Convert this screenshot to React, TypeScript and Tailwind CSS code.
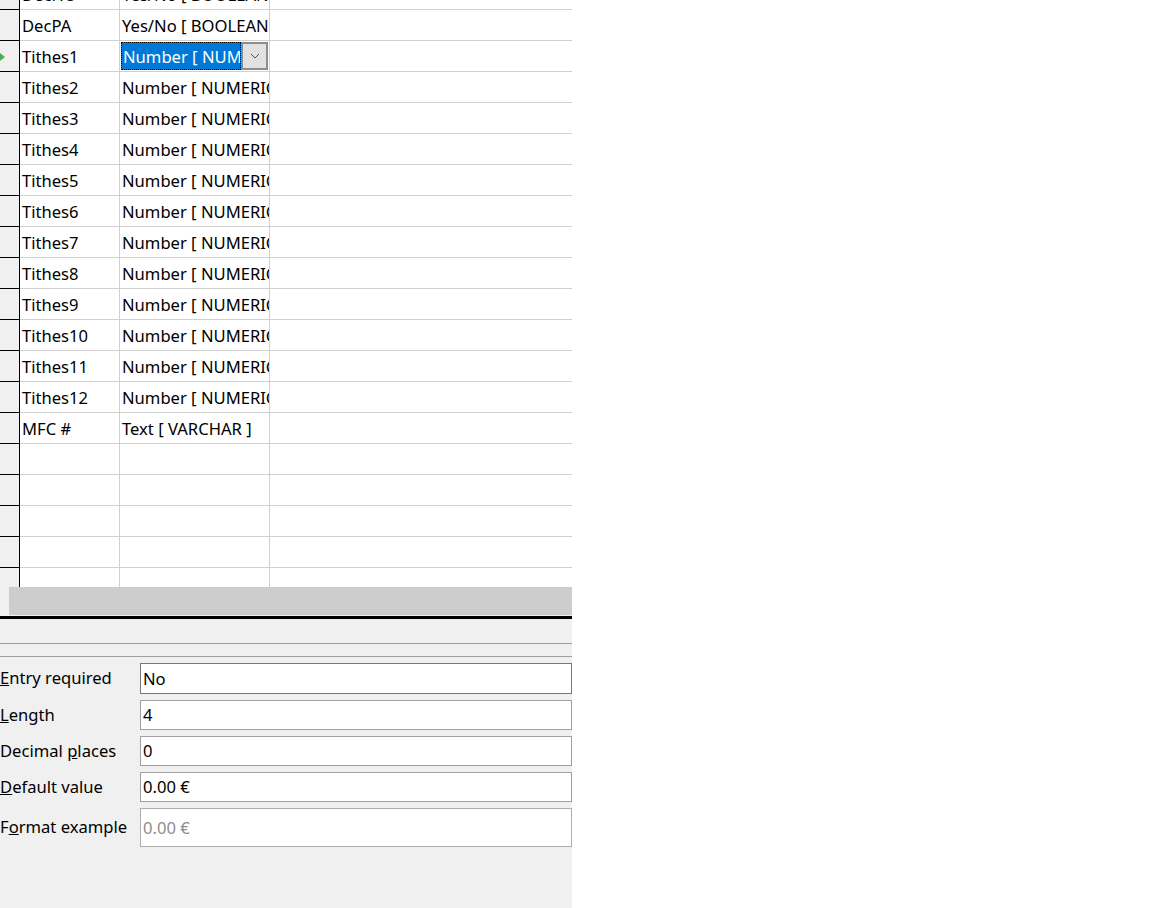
import React from "react";

type Row = { name: string; type: string; current?: boolean };

const rows: Row[] = [
  { name: "DecHO", type: "Yes/No [ BOOLEAN ]" },
  { name: "DecPA", type: "Yes/No [ BOOLEAN ]" },
  { name: "Tithes1", type: "Number [ NUMERIC ]", current: true },
  ...Array.from({ length: 11 }, (_, i) => ({ name: `Tithes${i + 2}`, type: "Number [ NUMERIC ]" })),
  { name: "MFC #", type: "Text [ VARCHAR ]" },
  { name: "", type: "" },
  { name: "", type: "" },
  { name: "", type: "" },
  { name: "", type: "" },
  { name: "", type: "" },
];

function GridRow({ row }: { row: Row }) {
  return (
    <div className="flex h-[31px] shrink-0">
      <div className="relative w-[20px] shrink-0 border-r border-b border-black bg-[#f0f0f0]">
        {row.current && (
          <svg className="absolute left-0 top-[12px]" width="6" height="8" viewBox="0 0 6 8">
            <path d="M0 0 L5 4 L0 8 Z" fill="#4caf50" />
          </svg>
        )}
      </div>
      <div className="w-[100px] shrink-0 overflow-hidden whitespace-nowrap border-r border-b border-[#d0d0d0] pl-[2px] leading-[31px]">
        {row.name}
      </div>
      {row.current ? (
        <div className="flex w-[150px] shrink-0 border-r border-b border-[#d0d0d0] p-px">
          <div className="flex-1 overflow-hidden whitespace-nowrap border border-dotted border-black bg-[#0078d7] pl-px leading-[27px] text-white">
            {row.type}
          </div>
          <div className="flex w-[27px] shrink-0 items-center justify-center border-2 border-[#8c8c8c] bg-[#e1e1e1]">
            <svg width="10" height="6" viewBox="0 0 10 6">
              <path d="M1 1 L5 5 L9 1" fill="none" stroke="#505050" strokeWidth="1" />
            </svg>
          </div>
        </div>
      ) : (
        <div className="w-[150px] shrink-0 overflow-hidden whitespace-nowrap border-r border-b border-[#d0d0d0] pl-[2px] leading-[31px]">
          {row.type}
        </div>
      )}
      <div className="flex-1 border-b border-[#d0d0d0]" />
    </div>
  );
}

function Field({ label, value, tall, muted }: { label: React.ReactNode; value: string; tall?: boolean; muted?: boolean }) {
  return (
    <div className="flex items-center">
      <div className="w-[140px] shrink-0 whitespace-nowrap">{label}</div>
      <div
        className={`flex-1 border bg-white pl-[2px] ${tall ? "h-[39px] leading-[37px]" : "h-[30px] leading-[28px]"} ${
          muted ? "border-[#adadad] text-[#8d8d8d]" : "border-[#a0a0a0]"
        }`}
      >
        {value}
      </div>
    </div>
  );
}

export default function App() {
  return (
    <div className="flex h-[908px] w-[1152px] bg-white font-['Noto_Sans',sans-serif] text-[16.6px] text-black">
      <div className="flex w-[572px] flex-col">
        <div className="h-[587px] overflow-hidden">
          <div className="-mt-[21px] flex flex-col">
            {rows.map((r, i) => (
              <GridRow key={i} row={r} />
            ))}
          </div>
        </div>
        <div className="flex h-[28px] shrink-0">
          <div className="w-[9px] bg-[#f0f0f0]" />
          <div className="flex-1 bg-[#cdcdcd]" />
        </div>
        <div className="h-px bg-[#f0f0f0]" />
        <div className="h-[3px] bg-black" />
        <div className="flex flex-1 flex-col bg-[#f0f0f0]">
          <div className="h-[24px]" />
          <div className="h-px bg-[#a0a0a0]" />
          <div className="h-[12px]" />
          <div className="h-px bg-[#a0a0a0]" />
          <div className="h-[6px]" />
          <div className="flex flex-col gap-[6px]">
            <div className="flex items-center">
              <div className="w-[140px] shrink-0 whitespace-nowrap">
                <u>E</u>ntry required
              </div>
              <div className="h-[31px] flex-1 border border-[#7a7a7a] bg-white pl-[2px] leading-[29px]">No</div>
            </div>
            <Field label={<><u>L</u>ength</>} value="4" />
            <Field label={<>Decimal <u>p</u>laces</>} value="0" />
            <Field label={<><u>D</u>efault value</>} value="0.00 €" />
            <Field label={<>F<u>o</u>rmat example</>} value="0.00 €" tall muted />
          </div>
        </div>
      </div>
      <div className="flex-1 bg-white" />
    </div>
  );
}
